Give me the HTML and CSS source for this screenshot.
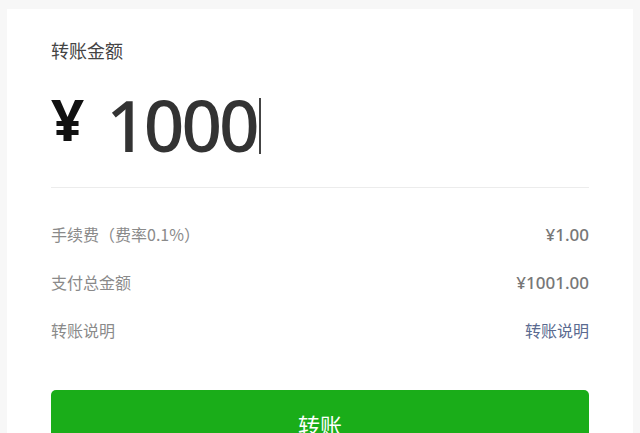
FILE: index.html
```
<!DOCTYPE html>
<html lang="zh-CN">
<head>
<title>转账</title>
<meta charset="UTF-8">
<meta name="viewport" content="width=device-width, initial-scale=1.0">
<link rel="stylesheet" href="styles.css">
</head>
<body>

<div class="card">
  <div class="amount-label">转账金额</div>
  <div class="amount-row">
    <span class="yen">¥</span>
    <span class="amount">1000</span>
    <span class="cursor"></span>
  </div>

  <ul class="detail-list">
    <li>
      <span class="detail-name">手续费（费率0.1%）</span>
      <span class="detail-value">¥1.00</span>
    </li>
    <li>
      <span class="detail-name">支付总金额</span>
      <span class="detail-value">¥1001.00</span>
    </li>
    <li>
      <span class="detail-name">转账说明</span>
      <span class="detail-link">转账说明</span>
    </li>
  </ul>

  <button class="submit">转账</button>
</div>

</body>
</html>
```

FILE: styles.css
```
body {
  margin: 0;
  background: #f7f7f7;
  font-family: "Noto Sans", "Noto Sans CJK SC", sans-serif;
  overflow: hidden;
}

.card {
  margin: 9px 7px 0 7px;
  padding: 29px 44px 0 44px;
  background: #fff;
  height: 440px;
}

.amount-label {
  font-family: "Noto Sans CJK SC", sans-serif;
  font-size: 18px;
  line-height: 25px;
  color: #444;
}

.amount-row {
  display: flex;
  align-items: center;
  height: 85px;
  margin-top: 19px;
  border-bottom: 1px solid #ececec;
  padding-bottom: 20px;
}

.yen {
  font-family: "Noto Sans", sans-serif;
  font-weight: 700;
  font-size: 58px;
  color: #111;
  margin-left: 0;
  margin-right: 22px;
  padding-bottom: 12px;
}

.amount {
  font-family: "Noto Sans", sans-serif;
  font-weight: 500;
  font-size: 71px;
  color: #333;
  letter-spacing: -3px;
}

.cursor {
  width: 2px;
  height: 56px;
  background: #444;
  margin-left: 2px;
  margin-top: 2px;
}

.detail-list {
  list-style: none;
  margin: 0;
  padding: 22px 0 0 0;
}

.detail-list li {
  display: flex;
  justify-content: space-between;
  align-items: center;
  height: 48px;
  font-size: 16px;
}

.detail-name {
  font-family: "Noto Sans CJK SC", sans-serif;
  color: #8a8a8a;
}

.detail-value {
  color: #777;
  font-size: 17px;
  font-weight: 500;
}

.detail-link {
  font-family: "Noto Sans CJK SC", sans-serif;
  color: #5a6a90;
}

.submit {
  display: block;
  width: 100%;
  margin-top: 36px;
  height: 68px;
  border: none;
  border-radius: 5px;
  background: #1aad19;
  color: #fff;
  font-family: "Noto Sans CJK SC", sans-serif;
  font-size: 22px;
}
```
